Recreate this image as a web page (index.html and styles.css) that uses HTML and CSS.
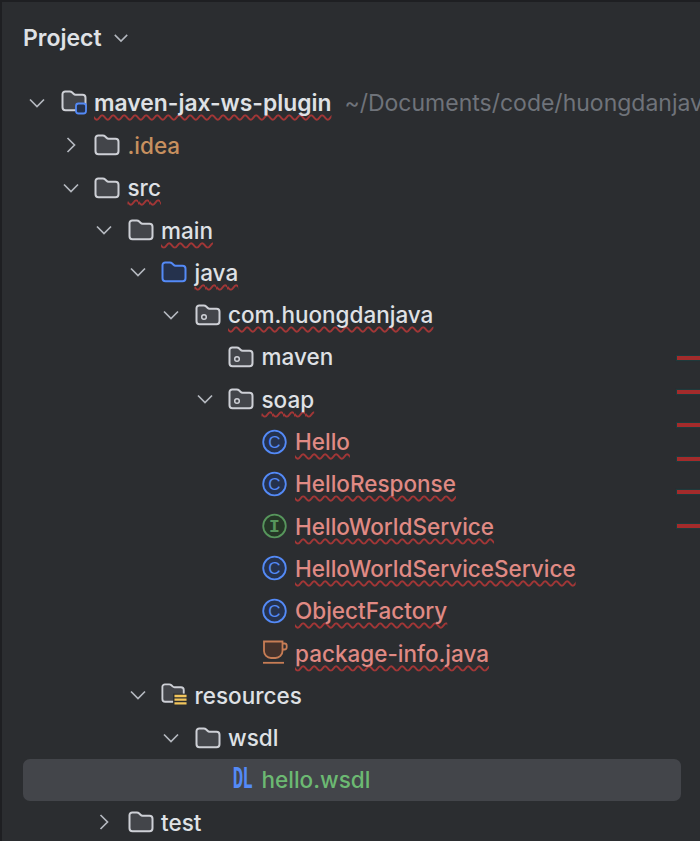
FILE: index.html
```html
<!DOCTYPE html>
<html lang="en">

<head>
  <meta charset="UTF-8">
  <title>Project</title>
  <link rel="stylesheet" href="styles.css">
</head>

<body>
  <svg class="defs" width="0" height="0" aria-hidden="true">
    <symbol id="down" viewBox="0 0 18 18"><path d="M2 5.500l7 7 7-7"/></symbol>
    <symbol id="right" viewBox="0 0 18 18"><path d="M5.500 2l7 7-7 7"/></symbol>
    <symbol id="folder" viewBox="0 0 26 22"><path d="M1.500 4.200a2.700 2.700 0 0 1 2.700-2.700h4.600c1 0 1.700.3 2.400 1l1.300 1.300c.6.6 1.200.9 2.100.9h6.900a3 3 0 0 1 3 3v9.600a3 3 0 0 1-3 3H4.500a3 3 0 0 1-3-3z"/></symbol>
  </svg>

  <header class="head">
    <h1>Project</h1>
    <svg class="arrow"><use href="#down"/></svg>
  </header>

  <ul class="tree">
    <li class="row d0">
      <svg class="arrow"><use href="#down"/></svg>
      <svg class="icon" viewBox="0 0 26 26">
        <use class="fold" href="#folder" width="26" height="22"/>
        <rect class="mod" x="15" y="13.500" width="10" height="10" rx="2.500"/>
      </svg>
      <span class="name bold err">maven-jax-ws-plugin</span>
      <span class="path">~/Documents/code/huongdanjava</span>
    </li>
    <li class="row d1">
      <svg class="arrow"><use href="#right"/></svg>
      <svg class="icon"><use class="fold" href="#folder"/></svg>
      <span class="name orange">.idea</span>
    </li>
    <li class="row d1">
      <svg class="arrow"><use href="#down"/></svg>
      <svg class="icon"><use class="fold" href="#folder"/></svg>
      <span class="name err">src</span>
    </li>
    <li class="row d2">
      <svg class="arrow"><use href="#down"/></svg>
      <svg class="icon"><use class="fold" href="#folder"/></svg>
      <span class="name err">main</span>
    </li>
    <li class="row d3">
      <svg class="arrow"><use href="#down"/></svg>
      <svg class="icon"><use class="fold blue" href="#folder"/></svg>
      <span class="name err">java</span>
    </li>
    <li class="row d4">
      <svg class="arrow"><use href="#down"/></svg>
      <svg class="icon" viewBox="0 0 26 22">
        <use class="fold" href="#folder" width="26" height="22"/>
        <circle class="pkg" cx="9" cy="13" r="2.300"/>
      </svg>
      <span class="name err">com.huongdanjava</span>
    </li>
    <li class="row d5">
      <span class="arrow"></span>
      <svg class="icon" viewBox="0 0 26 22">
        <use class="fold" href="#folder" width="26" height="22"/>
        <circle class="pkg" cx="9" cy="13" r="2.300"/>
      </svg>
      <span class="name">maven</span>
    </li>
    <li class="row d5">
      <svg class="arrow"><use href="#down"/></svg>
      <svg class="icon" viewBox="0 0 26 22">
        <use class="fold" href="#folder" width="26" height="22"/>
        <circle class="pkg" cx="9" cy="13" r="2.300"/>
      </svg>
      <span class="name err">soap</span>
    </li>
    <li class="row d6">
      <span class="arrow"></span>
      <svg class="icon" viewBox="0 0 26 26"><circle class="cls" cx="12.500" cy="13" r="11.300"/><text class="letter-c" x="12.500" y="19">C</text></svg>
      <span class="name red err">Hello</span>
    </li>
    <li class="row d6">
      <span class="arrow"></span>
      <svg class="icon" viewBox="0 0 26 26"><circle class="cls" cx="12.500" cy="13" r="11.300"/><text class="letter-c" x="12.500" y="19">C</text></svg>
      <span class="name red err">HelloResponse</span>
    </li>
    <li class="row d6">
      <span class="arrow"></span>
      <svg class="icon" viewBox="0 0 26 26"><circle class="int" cx="12.500" cy="13" r="11.300"/><text class="letter-i" x="12.500" y="19">I</text></svg>
      <span class="name red err">HelloWorldService</span>
    </li>
    <li class="row d6">
      <span class="arrow"></span>
      <svg class="icon" viewBox="0 0 26 26"><circle class="cls" cx="12.500" cy="13" r="11.300"/><text class="letter-c" x="12.500" y="19">C</text></svg>
      <span class="name red err">HelloWorldServiceService</span>
    </li>
    <li class="row d6">
      <span class="arrow"></span>
      <svg class="icon" viewBox="0 0 26 26"><circle class="cls" cx="12.500" cy="13" r="11.300"/><text class="letter-c" x="12.500" y="19">C</text></svg>
      <span class="name red err">ObjectFactory</span>
    </li>
    <li class="row d6">
      <span class="arrow"></span>
      <svg class="icon" viewBox="0 0 26 26">
        <path class="cup" d="M2 1.500h18.500v9.500a7 7 0 0 1-7 7H9a7 7 0 0 1-7-7z"/>
        <path class="cup-handle" d="M20.500 3.500h2a2.200 2.200 0 0 1 2.200 2.200v1.600a2.200 2.200 0 0 1-2.200 2.200h-2"/>
        <path class="cup-handle" d="M1 22.800h21"/>
      </svg>
      <span class="name red err">package-info.java</span>
    </li>
    <li class="row d3">
      <svg class="arrow"><use href="#down"/></svg>
      <svg class="icon" viewBox="0 0 28 26">
        <use class="fold" href="#folder" width="26" height="22"/>
        <rect class="res-bg" x="13" y="11.500" width="15" height="13"/>
        <path class="res" d="M14.500 14h13M14.500 18h13M14.500 22h13"/>
      </svg>
      <span class="name">resources</span>
    </li>
    <li class="row d4">
      <svg class="arrow"><use href="#down"/></svg>
      <svg class="icon"><use class="fold" href="#folder"/></svg>
      <span class="name">wsdl</span>
    </li>
    <li class="row d5 selected">
      <span class="arrow"></span>
      <span class="icon dl"><b>DL</b></span>
      <span class="name green">hello.wsdl</span>
    </li>
    <li class="row d2">
      <svg class="arrow"><use href="#right"/></svg>
      <svg class="icon"><use class="fold" href="#folder"/></svg>
      <span class="name">test</span>
    </li>
  </ul>

  <div class="marks">
    <i></i><i></i><i></i><i></i><i></i><i></i>
  </div>
</body>

</html>
```

FILE: styles.css
```css
html,
body {
  height: 100%;
}

body {
  margin: 0;
  overflow: hidden;
  position: relative;
  box-sizing: border-box;
  background-color: #2b2d30;
  border-top: 2px solid #1e1f22;
  border-left: 2px solid #1e1f22;
  color: #dfe1e5;
  font-family: Inter, "Liberation Sans", sans-serif;
  font-size: 22.500px;
  font-weight: 450;
  white-space: nowrap;
}

.defs {
  position: absolute;
}

.head {
  display: flex;
  align-items: center;
  gap: 11px;
  height: 72px;
  padding-left: 21px;
}

.head h1 {
  margin: 0;
  font-size: 23px;
  font-weight: 600;
}

.arrow {
  flex: none;
  width: 18px;
  height: 18px;
  margin-right: 14.500px;
  fill: none;
  stroke: #b4b8bf;
  stroke-width: 1.700;
}

.head .arrow {
  width: 16px;
  height: 16px;
  margin-right: 0;
}

.tree {
  margin: 8px 0 0;
  padding: 0;
  list-style: none;
}

.row {
  display: flex;
  align-items: center;
  height: 42.300px;
}

.d0 { padding-left: 26px; }
.d1 { padding-left: 59.500px; }
.d2 { padding-left: 93px; }
.d3 { padding-left: 126.500px; }
.d4 { padding-left: 160px; }
.d5 { padding-left: 193.500px; }
.d6 { padding-left: 227px; }

.icon {
  flex: none;
  width: 26px;
  height: 22px;
  margin-right: 7.500px;
  overflow: visible;
}

svg.icon[viewBox="0 0 26 26"],
svg.icon[viewBox="0 0 28 26"] {
  height: 26px;
}

.fold {
  fill: #43454a;
  stroke: #ced0d6;
  stroke-width: 2;
}

.fold.blue {
  fill: #25324d;
  stroke: #548af7;
}

.mod {
  fill: #25324d;
  stroke: #548af7;
  stroke-width: 1.800;
}

.pkg {
  fill: none;
  stroke: #ced0d6;
  stroke-width: 1.500;
}

.cls {
  fill: #25324d;
  stroke: #548af7;
  stroke-width: 1.800;
}

.int {
  fill: #253627;
  stroke: #57965c;
  stroke-width: 1.800;
}

.letter-c,
.letter-i {
  font-family: "Liberation Sans", sans-serif;
  font-size: 17px;
  font-weight: 400;
  text-anchor: middle;
  fill: #548af7;
}

.letter-i {
  font-family: "Liberation Mono", monospace;
  font-size: 18px;
  font-weight: 700;
  fill: #57965c;
}

.cup {
  fill: #45322b;
  stroke: #c77d55;
  stroke-width: 1.800;
}

.cup-handle {
  fill: none;
  stroke: #c77d55;
  stroke-width: 1.800;
}

.res-bg {
  fill: #2b2d30;
}

.res {
  fill: none;
  stroke: #f2c55c;
  stroke-width: 2.600;
}

.err {
  text-decoration: underline wavy #a23636 1.700px;
  text-underline-offset: 3px;
  text-decoration-skip-ink: none;
}

.bold {
  font-size: 22.850px;
  font-weight: 600;
}

.path {
  margin-left: 13px;
  font-size: 23px;
  font-weight: 400;
  color: #6f737a;
}

.orange {
  color: #c7905f;
}

.red {
  color: #e08a84;
}

.green {
  color: #6cb972;
}

.selected {
  margin: 0 19px 0 21px;
  padding-left: 172.500px;
  background-color: #43454a;
  border-radius: 7px;
}

.dl {
  display: flex;
  justify-content: center;
  color: #548af7;
  font-family: "Liberation Mono", monospace;
  font-size: 31px;
  line-height: 22px;
}

.dl b {
  letter-spacing: -1px;
  transform: translateX(2px) scaleX(0.56);
}

.marks {
  position: absolute;
  top: 354px;
  right: 0;
  display: flex;
  flex-direction: column;
  gap: 29.500px;
}

.marks i {
  display: block;
  width: 23px;
  height: 4px;
  background-color: #a32b2b;
  box-shadow: 0 0 1px 1px #1f3a3c;
}
```
